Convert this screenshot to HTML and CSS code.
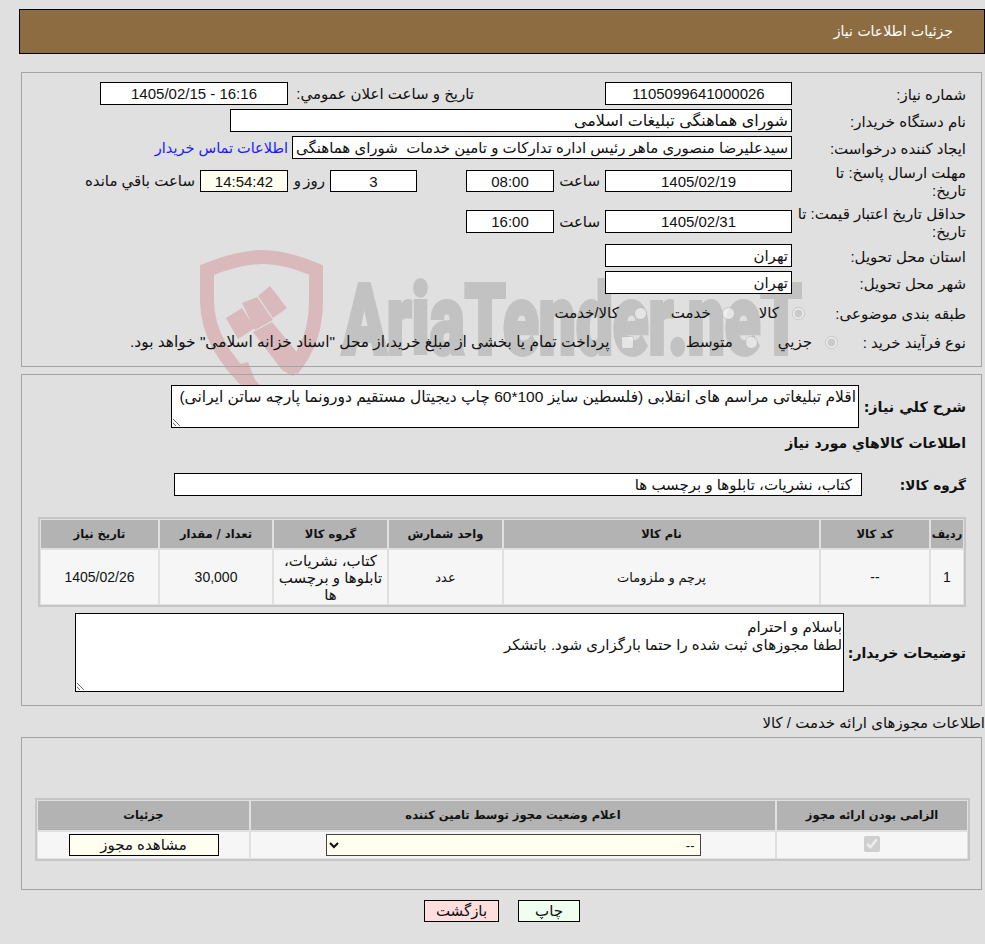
FILE: index.html
```html
<!DOCTYPE html>
<html lang="fa" dir="rtl">
<head>
<meta charset="utf-8">
<title>جزئیات اطلاعات نیاز</title>
<link rel="stylesheet" href="styles.css">
</head>
<body>
<svg class="watermark" width="985" height="390" viewBox="0 0 985 390" aria-hidden="true">
  <g class="wm-shield">
    <path class="wm-arm" d="M257 392 C225 360 207 335 207 300 L207 270 C230 261 247 257 262 257 C278 257 295 261 316 270 L316 300 C316 330 308 350 292 370"/>
    <polygon points="226,318 242,308 255,328 238,339"/>
    <polygon points="242,303 257,297 273,320 255,330"/>
    <polygon points="258,296 270,286 287,308 273,318"/>
    <polygon points="253,332 272,322 305,362 293,376 282,370"/>
    <polygon points="225,368 248,362 257,385 243,385"/>
  </g>
  <text class="wm-text" x="342" y="354" textLength="460" lengthAdjust="spacingAndGlyphs">AriaTender.neT</text>
</svg>

<main class="page" dir="rtl">
  <header class="title-bar">جزئیات اطلاعات نیاز</header>

  <section class="panel panel-info">
    <div class="row">
      <div class="label">شماره نیاز:</div>
      <div class="field w187 center">1105099641000026</div>
      <div class="inline-label ann">تاریخ و ساعت اعلان عمومي:</div>
      <div class="field w188 center">16:16 - 1405/02/15</div>
    </div>
    <div class="row">
      <div class="label">نام دستگاه خریدار:</div>
      <div class="field w562 buyer">شورای هماهنگی تبلیغات اسلامی</div>
    </div>
    <div class="row">
      <div class="label">ایجاد کننده درخواست:</div>
      <div class="field w500">سیدعلیرضا منصوری ماهر رئیس اداره تدارکات و تامین خدمات  شورای هماهنگی</div>
      <a class="contact" href="#">اطلاعات تماس خریدار</a>
    </div>
    <div class="row row-tall">
      <div class="label">مهلت ارسال پاسخ: تا<br>تاریخ:</div>
      <div class="field w187 center h22">1405/02/19</div>
      <div class="inline-label hour">ساعت</div>
      <div class="field w88 center h22">08:00</div>
      <div class="field w87 center h22 days">3</div>
      <div class="inline-label day">روز و</div>
      <div class="field w88 center h22 remain">14:54:42</div>
      <div class="inline-label left">ساعت باقي مانده</div>
    </div>
    <div class="row row-tall2">
      <div class="label">حداقل تاریخ اعتبار قیمت: تا<br>تاریخ:</div>
      <div class="field w187 center">1405/02/31</div>
      <div class="inline-label hour">ساعت</div>
      <div class="field w88 center">16:00</div>
    </div>
    <div class="row">
      <div class="label">استان محل تحویل:</div>
      <div class="field w187">تهران</div>
    </div>
    <div class="row">
      <div class="label">شهر محل تحویل:</div>
      <div class="field w187">تهران</div>
    </div>
    <div class="row row-radio">
      <div class="label">طبقه بندی موضوعی:</div>
      <label class="opt opt-a"><input type="radio" name="cat" disabled checked><span>کالا</span></label>
      <label class="opt opt-b"><input type="radio" name="cat" disabled><span>خدمت</span></label>
      <label class="opt opt-c"><input type="radio" name="cat" disabled><span>کالا/خدمت</span></label>
    </div>
    <div class="row row-radio2">
      <div class="label">نوع فرآیند خرید :</div>
      <label class="opt opt-d"><input type="radio" name="proc" disabled checked><span>جزيي</span></label>
      <label class="opt opt-e"><input type="radio" name="proc" disabled><span>متوسط</span></label>
      <label class="opt opt-f"><input type="checkbox" disabled><span>پرداخت تمام یا بخشی از مبلغ خرید،از محل "اسناد خزانه اسلامی" خواهد بود.</span></label>
    </div>
  </section>

  <section class="panel panel-goods">
    <div class="row summary">
      <div class="strong-label">شرح كلي نياز:</div>
      <textarea class="area area-summary" readonly>اقلام تبلیغاتی مراسم های انقلابی (فلسطین سایز 100*60 چاپ دیجیتال مستقیم دورونما پارچه ساتن ایرانی)</textarea>
    </div>
    <h2 class="goods-heading">اطلاعات کالاهاي مورد نياز</h2>
    <div class="row group">
      <div class="strong-label">گروه کالا:</div>
      <div class="field w688">کتاب، نشریات، تابلوها و برچسب ها</div>
    </div>
    <div class="grid grid-goods">
      <div class="th">ردیف</div>
      <div class="th">کد کالا</div>
      <div class="th">نام کالا</div>
      <div class="th">واحد شمارش</div>
      <div class="th">گروه کالا</div>
      <div class="th">تعداد / مقدار</div>
      <div class="th">تاریخ نیاز</div>
      <div class="td num">1</div>
      <div class="td num">--</div>
      <div class="td">پرچم و ملزومات</div>
      <div class="td">عدد</div>
      <div class="td wide">کتاب، نشریات، تابلوها و برچسب ها</div>
      <div class="td num">30,000</div>
      <div class="td num">1405/02/26</div>
    </div>
    <div class="row buyer-notes">
      <div class="strong-label">توضیحات خریدار:</div>
      <textarea class="area area-notes" readonly>باسلام و احترام
لطفا مجوزهای ثبت شده را حتما بارگزاری شود. باتشکر</textarea>
    </div>
  </section>

  <p class="license-title">اطلاعات مجوزهای ارائه خدمت / کالا</p>

  <section class="panel panel-license">
    <div class="grid grid-license">
      <div class="th">الزامی بودن ارائه مجوز</div>
      <div class="th">اعلام وضعیت مجوز توسط تامین کننده</div>
      <div class="th">جزئیات</div>
      <div class="td"><input type="checkbox" class="req" disabled checked></div>
      <div class="td">
        <select class="status"><option>--</option></select>
      </div>
      <div class="td"><button type="button" class="btn view">مشاهده مجوز</button></div>
    </div>
  </section>

  <div class="actions">
    <button type="button" class="btn print">چاپ</button>
    <button type="button" class="btn back">بازگشت</button>
  </div>
</main>
</body>
</html>
```

FILE: styles.css
```css
* { box-sizing: border-box; }
html, body { margin: 0; padding: 0; }
body {
  position: relative;
  width: 985px;
  height: 944px;
  overflow: hidden;
  background: #e0e0e0;
  color: #111;
  font: 15px/18px "Liberation Sans", "DejaVu Sans", sans-serif;
}
.watermark { position: absolute; left: 0; top: 0; direction: ltr; }
.wm-shield { fill: #d9b9bb; }
.wm-arm { fill: none; stroke: #d9b9bb; stroke-width: 14; }
.wm-text {
  fill: #c2c2c2;
  stroke: #c2c2c2;
  stroke-width: 4;
  font: 900 98px "Roboto", sans-serif;
  direction: ltr;
  text-anchor: start;
}

.page { position: relative; padding: 9px 0 0; }

.title-bar {
  height: 45px;
  margin: 0 0 18px 19px;
  padding: 0 31px;
  border: 1px solid #000;
  background: #8c6c40;
  color: #fff;
  font: 14px/43px "DejaVu Sans", sans-serif;
}

.panel {
  margin: 0 3px 0 21px;
  border: 1px solid #a4a4a4;
}
.panel-info {
  height: 295px;
  padding: 9px 15px 0 0;
  display: flex;
  flex-direction: column;
  gap: 4px;
}
.row { display: flex; align-items: center; height: 23px; }
.row-tall { height: 36px; }
.row-tall2 { height: 37px; }
.row-radio { height: 30px; }
.row-radio2 { height: 20px; }

.label { width: 174px; padding-top: 2px; flex: none; white-space: nowrap; }
.field {
  flex: none;
  height: 23px;
  padding: 0 3px;
  border: 1px solid #000;
  background: #fff;
  line-height: 22px;
  white-space: pre;
  overflow: hidden;
}
.center { text-align: center; }
.h22 { height: 22px; line-height: 21px; }
.buyer { font-size: 16px; }
.w187 { width: 187px; }
.w188 { width: 188px; }
.w562 { width: 562px; }
.w500 { width: 500px; }
.w88 { width: 88px; }
.w87 { width: 87px; }
.w688 { width: 688px; padding-right: 9px; }
.inline-label { flex: none; white-space: nowrap; }
.ann { margin-right: 131px; width: 186px; }
.hour { width: 46px; margin-right: 5px; }
.days { margin-right: 49px; }
.day { width: 33px; margin-right: 5px; word-spacing: -2px; }
.remain { margin-right: 4px; background: #fffff0; }
.left { margin-right: 5px; }
.contact { color: #1a1aff; text-decoration: none; margin-right: 4px; white-space: nowrap; font-size: 14.5px; }

.opt { display: flex; align-items: center; flex: none; white-space: nowrap; }
.opt input { margin: 0; width: 13px; height: 13px; flex: none; }
.opt span { margin-right: 13px; }
.opt-a { margin-right: -13px; }
.opt-b { margin-right: 24px; }
.opt-b span { margin-right: 11px; }
.opt-c { margin-right: 24px; }
.opt-c span { margin-right: 15px; }
.opt-d { margin-right: -46px; }
.opt-e { margin-right: 20px; }
.opt-e span { margin-right: 12px; }
.opt-f { margin-right: 52px; }
.opt-f span { margin-right: 11px; font-size: 15.4px; }

.panel-goods {
  height: 332px;
  margin-top: 7px;
  padding: 10px 15px 0 0;
}
.strong-label { font: 700 14px/18px "DejaVu Sans", sans-serif; white-space: nowrap; flex: none; }
.summary { height: 43px; }
.summary .strong-label { width: 107px; font-size: 14.3px; }
.area {
  display: block;
  flex: none;
  margin: 0;
  padding: 2px;
  border: 1px solid #000;
  border-radius: 0;
  background: #fff;
  color: #111;
  font: 15px/18px "Liberation Sans", "DejaVu Sans", sans-serif;
  outline: none;
}
.area-summary { width: 688px; height: 43px; font-size: 15.5px; }
.goods-heading {
  height: 18px;
  margin: 6px 0 21px;
  font: 700 14px/18px "DejaVu Sans", sans-serif;
}
.group .strong-label { width: 104px; font-size: 13.6px; }

.grid {
  display: grid;
  gap: 2px;
  padding: 1px;
  border: 2px solid #c6c6c6;
}
.grid-goods {
  width: 928px;
  margin: 21px 0 6px;
  grid-template-columns: 32px 108px 315px 113px 113px 112px 117px;
  grid-template-rows: 28px 54px;
}
.th, .td { display: flex; align-items: center; justify-content: center; text-align: center; }
.th { background: #b3b3b3; font: 700 11.5px/17px "DejaVu Sans", sans-serif; }
.td { background: #f6f6f6; font-size: 13px; line-height: 17px; }
.td.num { font-size: 14px; }
.td.wide { font-size: 15px; }

.buyer-notes { height: 79px; }
.buyer-notes .strong-label { width: 122px; }
.area-notes { width: 769px; height: 79px; padding: 4px 1px 2px 2px; }

.license-title { margin: 8px 0 5px; height: 18px; }

.panel-license {
  height: 153px;
  padding: 60px 11px 0 0;
}
.grid-license {
  width: 935px;
  margin: 0;
  grid-template-columns: 190px 524px 211px;
  grid-template-rows: 29px 26px;
}
.req { margin: 0 0 2px; width: 16px; height: 16px; }
.status {
  width: 375px;
  height: 22px;
  padding: 0 1px;
  border: 1px solid #444;
  border-radius: 0;
  background-color: #fffff0;
  color: #111;
  font: 13px "Liberation Sans", "DejaVu Sans", sans-serif;
}
.btn {
  height: 22px;
  margin: 0;
  padding: 0;
  border: 1px solid #000;
  border-radius: 0;
  color: #111;
  font: 15px/18px "Liberation Sans", "DejaVu Sans", sans-serif;
}
.view { width: 150px; background: #fffff0; }
.actions { display: flex; gap: 19px; margin-top: 10px; padding-right: 405px; }
.print { width: 62px; background: #efffef; }
.back { width: 75px; background: #ffdede; }
```
